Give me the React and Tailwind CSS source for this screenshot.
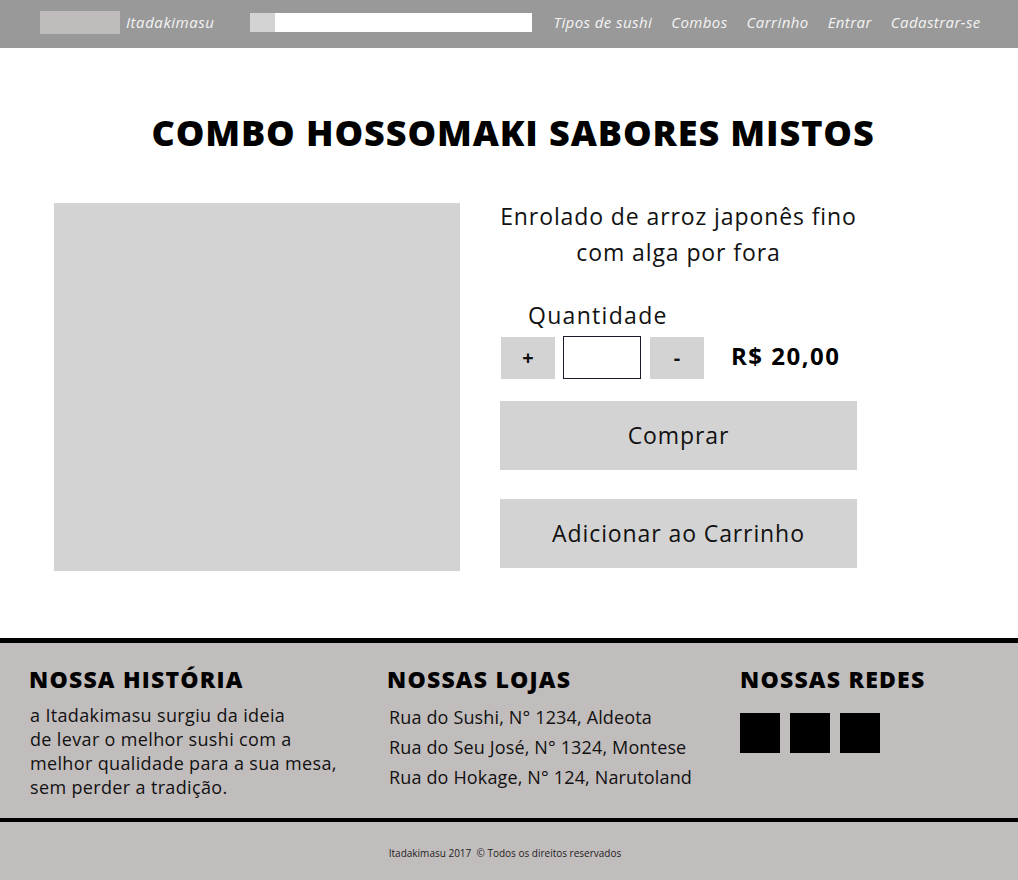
import React from "react";

export default function App() {
  return (
    <div className="w-[1018px] min-h-[880px] bg-white flex flex-col font-['Open_Sans','Liberation_Sans',sans-serif] text-[#111]">
      {/* Header */}
      <header className="h-12 bg-[#999999] flex items-center pl-[40px] pb-[3px]">
        <div className="w-[80px] h-[23px] bg-[#c1bcbc]" />
        <span className="ml-[6px] italic text-[15px] text-[#f4f4f4] tracking-[0.55px]">Itadakimasu</span>
        <div className="ml-[36px] flex w-[282px] h-[19px]">
          <div className="w-[25px] h-full bg-[#d3d3d3]" />
          <div className="flex-1 h-full bg-white" />
        </div>
        <nav className="ml-[21px] flex gap-[19px] italic text-[15px] tracking-[0.42px] text-[#f4f4f4]">
          <a>Tipos de sushi</a>
          <a>Combos</a>
          <a>Carrinho</a>
          <a>Entrar</a>
          <a>Cadastrar-se</a>
        </nav>
      </header>

      {/* Main */}
      <main className="flex-1 flex flex-col">
        <h1 className="text-center font-extrabold text-[36px] leading-[40px] mt-[65px] tracking-[0.9px] pl-[8px] text-black">
          COMBO HOSSOMAKI SABORES MISTOS
        </h1>
        <div className="flex mt-[50px] pl-[54px]">
          <div className="w-[406px] h-[368px] bg-[#d3d3d3]" />
          <div className="ml-[40px] w-[357px] flex flex-col text-[23px] tracking-[0.9px]">
            <p className="text-center whitespace-nowrap leading-[36px] -mt-[5px] text-[#111]">
              Enrolado de arroz japonês fino
              <br />
              com alga por fora
            </p>
            <div className="mt-[30px] pl-[28px] leading-[30px] tracking-[1.3px]">Quantidade</div>
            <div className="flex items-center mt-[6px]">
              <button className="ml-[1px] w-[54px] h-[42px] bg-[#d3d3d3] text-[20px] font-bold tracking-normal">+</button>
              <div className="ml-[8px] w-[78px] h-[43px] border border-[#1a1a2e] bg-white" />
              <button className="ml-[9px] w-[54px] h-[42px] bg-[#d3d3d3] text-[20px] font-bold tracking-normal">-</button>
              <span className="ml-[27px] -mt-[3px] text-[24px] font-bold tracking-[1.5px] text-black">R$ 20,00</span>
            </div>
            <button className="mt-[22px] w-[357px] h-[69px] bg-[#d3d3d3] whitespace-nowrap">Comprar</button>
            <button className="mt-[29px] w-[357px] h-[69px] bg-[#d3d3d3] whitespace-nowrap">Adicionar ao Carrinho</button>
          </div>
        </div>
      </main>

      {/* Footer */}
      <footer className="mt-[67px] border-t-[5px] border-black bg-[#c2bdbd]">
        <div className="h-[175px] flex pt-[22px]">
          <div className="w-[358px] pl-[29px]">
            <h2 className="font-extrabold text-[23px] leading-[28px] tracking-[1.2px] text-black">NOSSA HISTÓRIA</h2>
            <p className="mt-[10px] ml-[1px] text-[18px] leading-[24px] tracking-[0.35px] text-[#111]">
              a Itadakimasu surgiu da ideia
              <br />
              de levar o melhor sushi com a
              <br />
              melhor qualidade para a sua mesa,
              <br />
              sem perder a tradição.
            </p>
          </div>
          <div className="w-[353px] pl-[29px]">
            <h2 className="font-extrabold text-[23px] leading-[28px] tracking-[1.2px] text-black">NOSSAS LOJAS</h2>
            <ul className="mt-[9px] ml-[2px] text-[18px] leading-[30px] tracking-[0.15px] text-[#111]">
              <li>Rua do Sushi, N° 1234, Aldeota</li>
              <li>Rua do Seu José, N° 1324, Montese</li>
              <li>Rua do Hokage, N° 124, Narutoland</li>
            </ul>
          </div>
          <div className="pl-[29px]">
            <h2 className="font-extrabold text-[23px] leading-[28px] tracking-[1.2px] text-black">NOSSAS REDES</h2>
            <div className="mt-[20px] flex gap-[10px]">
              <div className="w-[40px] h-[40px] bg-black" />
              <div className="w-[40px] h-[40px] bg-black" />
              <div className="w-[40px] h-[40px] bg-black" />
            </div>
          </div>
        </div>
        <div className="border-t-[4px] border-black h-[62px] flex items-center justify-center pt-[4px]">
          <span className="text-[10px] text-[#222] pr-[8px]">Itadakimasu 2017&nbsp; © Todos os direitos reservados</span>
        </div>
      </footer>
    </div>
  );
}
